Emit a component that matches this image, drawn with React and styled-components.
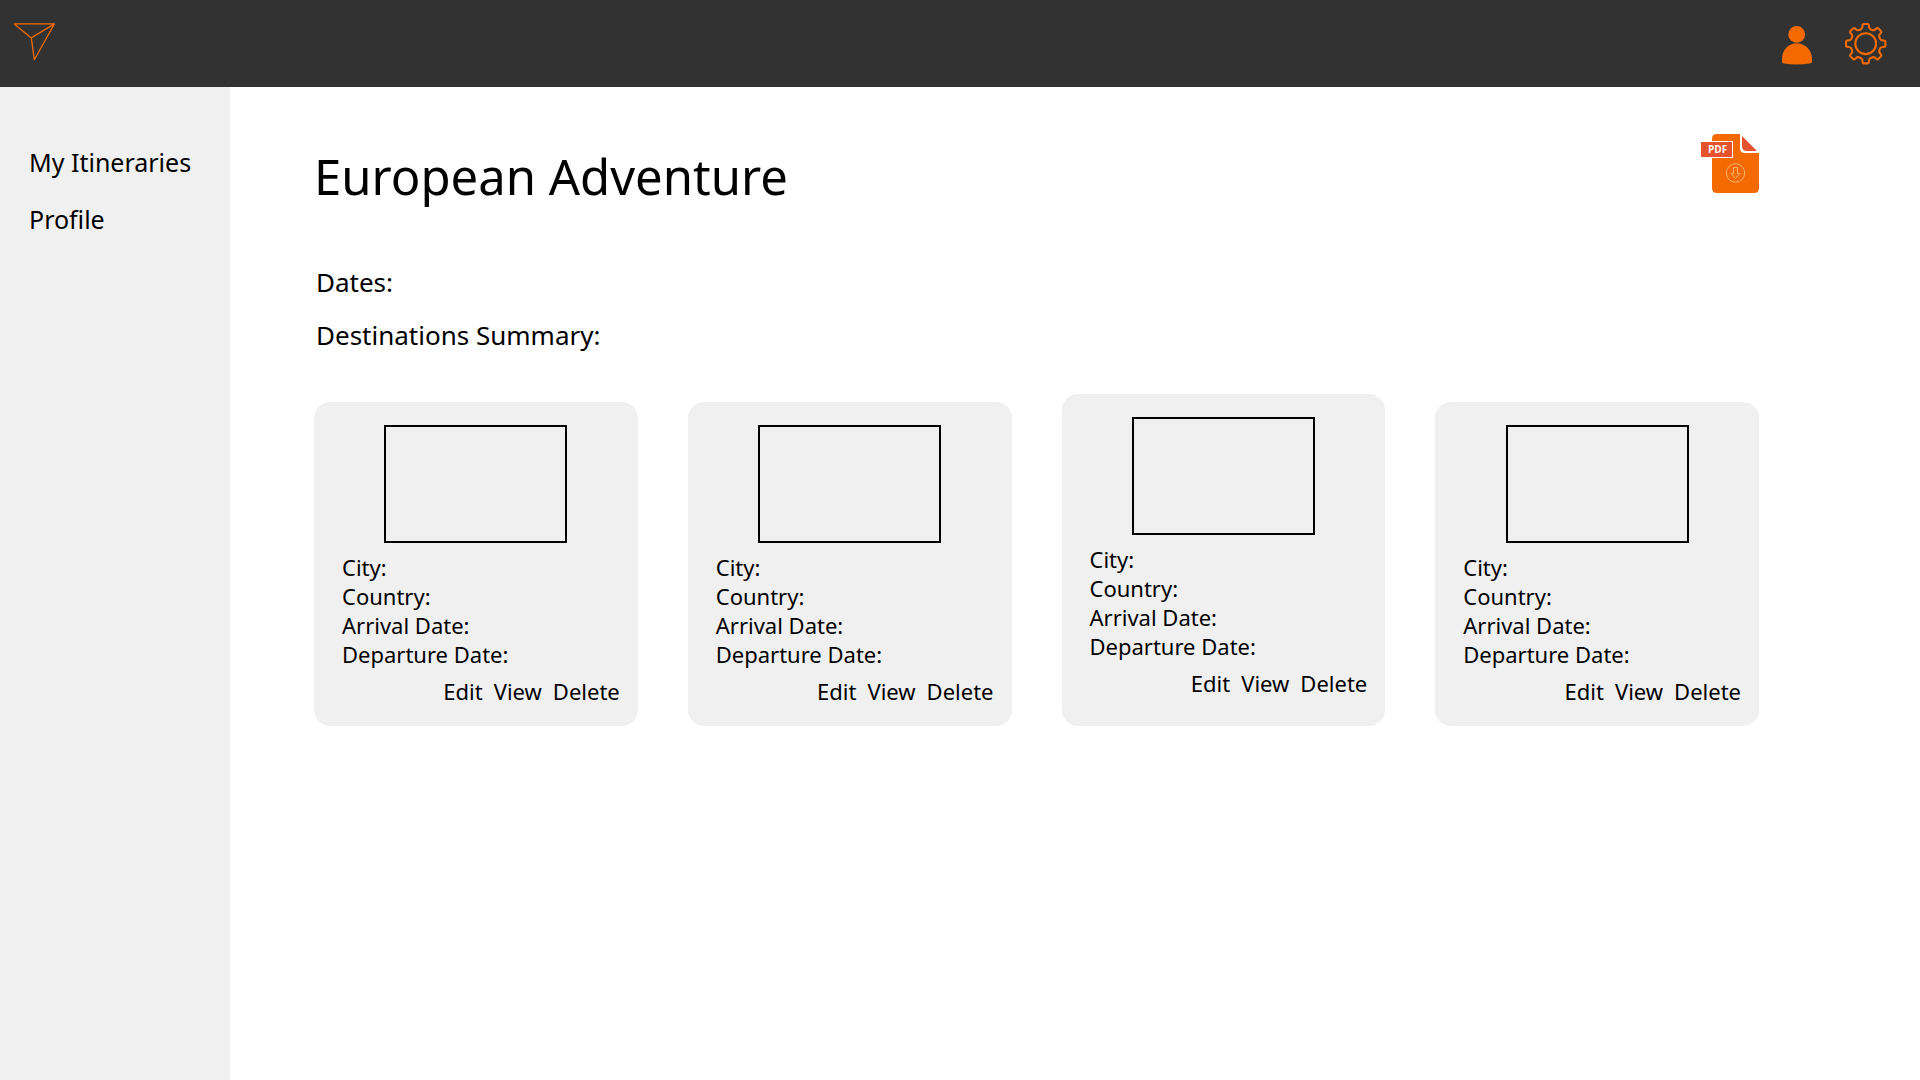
import React from "react";
import styled, { createGlobalStyle } from "styled-components";

const GlobalStyle = createGlobalStyle`
  * { box-sizing: border-box; }
  body {
    margin: 0;
    background: #ffffff;
    color: #000000;
    font-family: "Noto Sans", "Open Sans", sans-serif;
  }
`;

const Page = styled.div`
  min-height: 100vh;
  display: flex;
  flex-direction: column;
`;

const TopBar = styled.header`
  display: flex;
  justify-content: space-between;
  align-items: center;
  height: 87px;
  padding: 0 32px 0 12px;
  background: #323232;
`;

const HomeLink = styled.a`
  display: flex;
  padding-bottom: 4px;
`;

const BarActions = styled.div`
  display: flex;
  align-items: center;
  gap: 31px;
`;

const IconButton = styled.button`
  display: flex;
  padding: 0;
  border: 0;
  background: none;
  cursor: pointer;
`;

const Body = styled.div`
  display: flex;
  flex: 1;
`;

const Sidebar = styled.nav`
  flex: 0 0 230px;
  display: flex;
  flex-direction: column;
  gap: 21px;
  padding: 57px 29px;
  background: #f0f0f0;
`;

const NavLink = styled.a`
  color: inherit;
  text-decoration: none;
  white-space: nowrap;
  font-size: 25px;
  line-height: 36px;
`;

const Main = styled.main`
  flex: 1;
  min-width: 0;
  padding: 46px 161px 46px 84px;
`;

const TitleRow = styled.div`
  display: flex;
  justify-content: space-between;
  align-items: flex-start;
`;

const Title = styled.h1`
  margin: 0;
  padding-top: 11px;
  font-size: 49px;
  font-weight: 400;
  line-height: 64px;
`;

const Summary = styled.div`
  display: flex;
  flex-direction: column;
  gap: 17px;
  margin-top: 56px;
  padding-left: 2px;
`;

const SummaryLine = styled.p`
  margin: 0;
  font-size: 26px;
  line-height: 36px;
`;

const CardGrid = styled.ul`
  display: grid;
  grid-template-columns: repeat(4, 1fr);
  align-items: end;
  gap: 50px;
  margin: 41px 0 0;
  padding: 0;
  list-style: none;
`;

const Card = styled.li`
  min-height: ${(p) => (p.$tall ? 332 : 324)}px;
  padding: 23px 18px 16px 28px;
  border-radius: 16px;
  background: #f0f0f0;
`;

const PhotoRow = styled.div`
  display: flex;
  justify-content: center;
  padding-right: 10px;
`;

const Photo = styled.div`
  width: 183px;
  height: 118px;
  border: 2px solid #000000;
`;

const Fields = styled.dl`
  margin: 10px 0 0;
  font-size: 22px;
  line-height: 29px;
`;

const Field = styled.dt`
  margin: 0;
`;

const CardActions = styled.div`
  display: flex;
  justify-content: flex-end;
  gap: 11px;
  margin-top: 8px;
`;

const TextButton = styled.button`
  padding: 0;
  border: 0;
  background: none;
  color: inherit;
  font-family: inherit;
  font-size: 22px;
  line-height: 29px;
  cursor: pointer;
`;

const PdfLabel = styled.text`
  font-family: "Open Sans", "Noto Sans", sans-serif;
  font-size: 10px;
  font-weight: 700;
  fill: #ffffff;
`;

const ORANGE = "#f56a00";

function LogoIcon() {
  return (
    <svg width="44" height="40" viewBox="0 0 44 40" fill="none" stroke={ORANGE} strokeWidth="1.3" strokeLinejoin="round" aria-hidden="true">
      <path d="M2.300 1.900H42.400L22.300 37.700L19.300 15.900Z" />
      <path d="M19.300 15.900L42.400 1.900" />
    </svg>
  );
}

function UserIcon() {
  return (
    <svg width="32" height="44" viewBox="0 0 32 44" fill={ORANGE} aria-hidden="true">
      <circle cx="15.700" cy="12.400" r="8.400" />
      <path d="M1 39.700V37.200C1 27.700 7.500 21.200 15.700 21.200S31 27.700 31 37.200V39.700C31 40.700 30 41.200 28.500 41.500C20 42.900 11 42.900 3 41.500C1.700 41.200 1 40.700 1 39.700Z" />
    </svg>
  );
}

/* Outline of an eight-toothed cog, one tooth every 45 degrees. */
function cogPath(c, outer, root) {
  const at = (r, deg) => {
    const a = (deg * Math.PI) / 180;
    return `${(c + r * Math.sin(a)).toFixed(2)} ${(c - r * Math.cos(a)).toFixed(2)}`;
  };
  let d = "";
  for (let i = 0; i < 8; i += 1) {
    const t = i * 45;
    d += `${i ? "L" : "M"}${at(root, t - 18)}`;
    d += `Q${at(root + 0.6, t - 12)} ${at(root + 2, t - 11)}`;
    d += `L${at(outer - 1.4, t - 10)}Q${at(outer, t - 9.5)} ${at(outer, t - 6)}`;
    d += `L${at(outer, t + 6)}Q${at(outer, t + 9.5)} ${at(outer - 1.4, t + 10)}`;
    d += `L${at(root + 2, t + 11)}Q${at(root + 0.6, t + 12)} ${at(root, t + 18)}`;
  }
  return `${d}Z`;
}

function GearIcon() {
  return (
    <svg width="44" height="44" viewBox="0 0 44 44" fill="none" stroke={ORANGE} strokeWidth="2.1" strokeLinejoin="round" aria-hidden="true">
      <path d={cogPath(21.7, 19.8, 15.2)} />
      <circle cx="21.700" cy="21.700" r="10.400" />
    </svg>
  );
}

function PdfIcon() {
  return (
    <svg width="58" height="62" viewBox="0 0 58 62" aria-hidden="true">
      <path d="M16 1H39V15Q39 20 44 20H58V55Q58 60 53 60H16Q11 60 11 55V6Q11 1 16 1Z" fill={ORANGE} />
      <path d="M41 3L56 18H46Q41 18 41 13Z" fill="#e5522d" />
      <path d="M0 8H32V25H0Z" fill="#ffffff" />
      <path d="M0 9H31V24H0Z" fill="#e5522d" />
      <PdfLabel x="7" y="20">PDF</PdfLabel>
      <g fill="none" stroke="#fbb27c" strokeWidth="1">
        <circle cx="34.500" cy="40" r="9.200" />
        <path d="M32.500 34.500H36.500V40.500H39L34.500 45.500L30 40.500H32.500Z" />
      </g>
    </svg>
  );
}

const fields = ["City:", "Country:", "Arrival Date:", "Departure Date:"];
const destinations = [{ id: 1 }, { id: 2 }, { id: 3, tall: true }, { id: 4 }];

function DestinationCard({ tall }) {
  return (
    <Card $tall={tall}>
      <PhotoRow>
        <Photo />
      </PhotoRow>
      <Fields>
        {fields.map((name) => (
          <Field key={name}>{name}</Field>
        ))}
      </Fields>
      <CardActions>
        <TextButton type="button">Edit</TextButton>
        <TextButton type="button">View</TextButton>
        <TextButton type="button">Delete</TextButton>
      </CardActions>
    </Card>
  );
}

export default function App() {
  return (
    <Page>
      <GlobalStyle />
      <TopBar>
        <HomeLink href="#home" aria-label="Home">
          <LogoIcon />
        </HomeLink>
        <BarActions>
          <IconButton type="button" aria-label="Account">
            <UserIcon />
          </IconButton>
          <IconButton type="button" aria-label="Settings">
            <GearIcon />
          </IconButton>
        </BarActions>
      </TopBar>
      <Body>
        <Sidebar>
          <NavLink href="#itineraries">My Itineraries</NavLink>
          <NavLink href="#profile">Profile</NavLink>
        </Sidebar>
        <Main>
          <TitleRow>
            <Title>European Adventure</Title>
            <IconButton type="button" aria-label="Download PDF">
              <PdfIcon />
            </IconButton>
          </TitleRow>
          <Summary>
            <SummaryLine>Dates:</SummaryLine>
            <SummaryLine>Destinations Summary:</SummaryLine>
          </Summary>
          <CardGrid>
            {destinations.map((d) => (
              <DestinationCard key={d.id} tall={d.tall} />
            ))}
          </CardGrid>
        </Main>
      </Body>
    </Page>
  );
}
